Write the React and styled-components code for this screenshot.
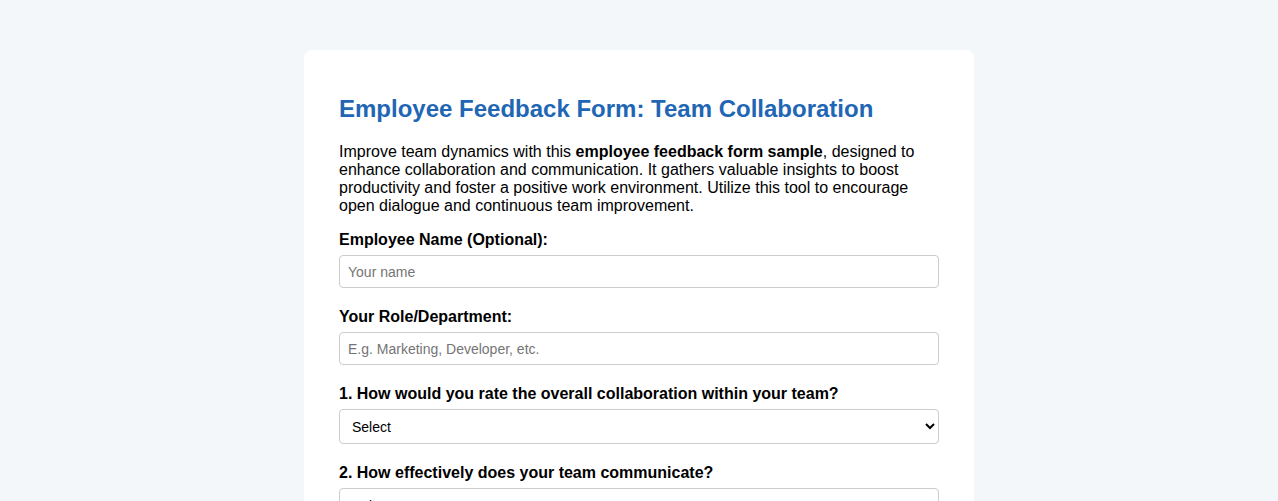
import React from 'react';
import styled, { createGlobalStyle } from 'styled-components';

const GlobalStyle = createGlobalStyle`
    body {
        margin: 0;
        background: #f4f7fa;
        font-family: "Liberation Sans", Arial, sans-serif;
        color: #000;
    }
`;

const Card = styled.div`
    width: 670px;
    box-sizing: border-box;
    margin: 50px auto;
    padding: 45px 35px 35px;
    background: #fff;
    border-radius: 8px;
`;

const Title = styled.h1`
    margin: 0 0 20px;
    font-size: 24px;
    line-height: 28px;
    font-weight: bold;
    color: #1f66b4;
`;

const Intro = styled.p`
    margin: 0 0 16px;
    font-size: 16px;
    line-height: 18px;
`;

const Group = styled.div`
    margin-bottom: 20px;
`;

const Label = styled.label`
    display: block;
    margin-bottom: 6px;
    font-size: 16px;
    line-height: 18px;
    font-weight: bold;
`;

const TextInput = styled.input`
    display: block;
    width: 600px;
    height: 33px;
    box-sizing: border-box;
    padding: 0 8px;
    border: 1px solid #ccc;
    border-radius: 4px;
    font-family: "Liberation Sans", Arial, sans-serif;
    font-size: 14px;
    &::placeholder {
        color: #757575;
    }
`;

const Select = styled.select`
    display: block;
    width: 600px;
    height: 35px;
    box-sizing: border-box;
    padding: 0 8px;
    border: 1px solid #ccc;
    border-radius: 4px;
    background: #fff;
    font-family: "Liberation Sans", Arial, sans-serif;
    font-size: 14px;
    color: #000;
`;

const ratings = ['Select', 'Excellent', 'Good', 'Average', 'Poor'];

function Question({ label, children }) {
    return (
        <Group>
            <Label>{label}</Label>
            {children}
        </Group>
    );
}

export default function App() {
    return (
        <>
            <GlobalStyle />
            <Card>
                <Title>Employee Feedback Form: Team Collaboration</Title>
                <Intro>
                    Improve team dynamics with this <strong>employee feedback form sample</strong>, designed to
                    enhance collaboration and communication. It gathers valuable insights to boost
                    productivity and foster a positive work environment. Utilize this tool to encourage
                    open dialogue and continuous team improvement.
                </Intro>
                <Question label="Employee Name (Optional):">
                    <TextInput placeholder="Your name" />
                </Question>
                <Question label="Your Role/Department:">
                    <TextInput placeholder="E.g. Marketing, Developer, etc." />
                </Question>
                <Question label="1. How would you rate the overall collaboration within your team?">
                    <Select>
                        {ratings.map(r => <option key={r}>{r}</option>)}
                    </Select>
                </Question>
                <Question label="2. How effectively does your team communicate?">
                    <Select>
                        {ratings.map(r => <option key={r}>{r}</option>)}
                    </Select>
                </Question>
                <Question label="3. How well are responsibilities shared within your team?">
                    <Select>
                        {ratings.map(r => <option key={r}>{r}</option>)}
                    </Select>
                </Question>
            </Card>
        </>
    );
}
